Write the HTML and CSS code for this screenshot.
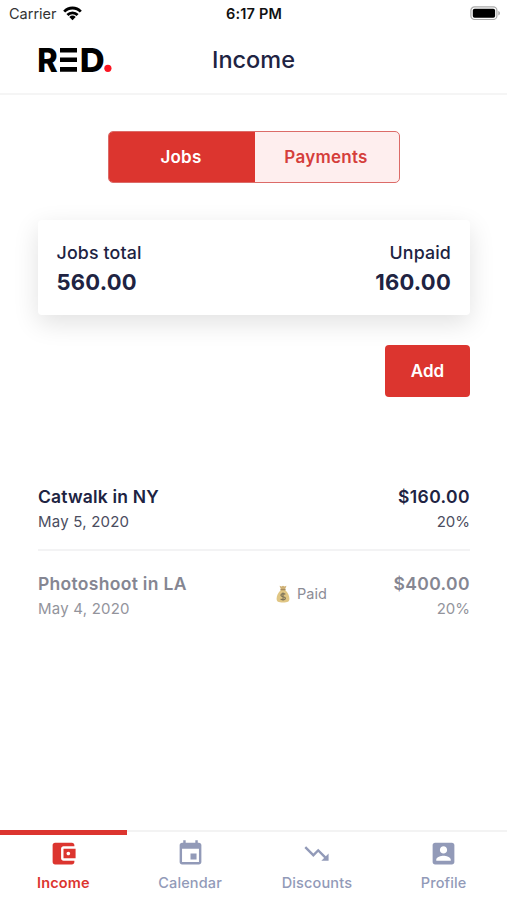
FILE: index.html
```html
<!DOCTYPE html>
<html lang="en">
<head>
<meta charset="utf-8">
<title>Income</title>
<link rel="stylesheet" href="styles.css">
</head>
<body>
<div class="app">
  <div class="status">
    <div class="carrier"><span>Carrier</span>
      <svg width="20" height="15" viewBox="0 0 20 15"><g fill="none" stroke="#000" stroke-width="2.8"><path d="M1.200 5.600C5.800.8 13.200.8 17.800 5.600"/><path d="M4.400 9C7.200 6.100 11.800 6.100 14.600 9"/></g><path d="M6.300 10.900c1.800-1.800 4.600-1.800 6.400 0L9.500 14.200z"/></svg>
    </div>
    <div class="time">6:17 PM</div>
    <svg class="battery" width="31" height="15" viewBox="0 0 31 15"><rect x=".9" y=".9" width="26" height="12.6" rx="3.6" fill="#fff" stroke="#aaa" stroke-width="1.2"/><rect x="2.8" y="2.7" width="22.3" height="9" rx="1.8"/><path d="M28.3 5c2.2.7 2.2 3.7 0 4.4z" fill="#aaa"/></svg>
  </div>
  <header class="header">
    <svg class="logo" width="80" height="44" viewBox="-3 -8 80 44"><text x="-.7" y="25.7" textLength="20.500" lengthAdjust="spacingAndGlyphs">R</text><path d="M22 2h17v4.600H22zM22 11.500h17v4.600H22zM22 21.100h17v4.600H22z"/><text x="41.700" y="25.7" textLength="25" lengthAdjust="spacingAndGlyphs">D</text><circle cx="69.9" cy="22.3" r="3.6" fill="#fa1522"/></svg>
    <h1>Income</h1>
  </header>
  <main>
    <div class="tabs"><div class="tab on">Jobs</div><div class="tab">Payments</div></div>
    <section class="card">
      <div><div class="label">Jobs total</div><div class="sum">560.00</div></div>
      <div class="right"><div class="label">Unpaid</div><div class="sum">160.00</div></div>
    </section>
    <button class="add">Add</button>
    <div class="list">
      <div class="row">
        <div class="what"><div class="name">Catwalk in NY</div><div class="sub">May 5, 2020</div></div>
        <div class="right"><div class="name amount">$160.00</div><div class="sub">20%</div></div>
      </div>
      <div class="row done">
        <div class="what"><div class="name">Photoshoot in LA</div><div class="sub">May 4, 2020</div></div>
        <div class="paid">
          <svg width="14" height="18" viewBox="0 0 14 18"><path d="M3.5.8l2 .6L7 .7l1.5.7 2-.6L9 4.4H5z" fill="#cfb074"/><path d="M5 5C2 7.600.6 10.500.6 13.800.6 16.600 2.300 17.500 7 17.500s6.400-.9 6.400-3.700C13.400 10.500 12 7.600 9 5z" fill="#e0c684"/><path d="M4.400 4.700h5.200" stroke="#a08455" stroke-width="1.200"/><path d="M9.300 9.400C8.400 8.300 4.900 8.300 4.900 10.200c0 2 4.500 1.100 4.500 3.100 0 1.900-3.800 1.900-4.800.6M7 7.600v8" fill="none" stroke="#7d7359" stroke-width="1.200"/></svg>
          <span>Paid</span>
        </div>
        <div class="right"><div class="name amount">$400.00</div><div class="sub">20%</div></div>
      </div>
    </div>
  </main>
  <nav class="nav">
    <div class="item on"><svg viewBox="0 0 24 24"><path d="M21 18v1c0 1.100-.9 2-2 2H5c-1.110 0-2-.9-2-2V5c0-1.100.89-2 2-2h14c1.100 0 2 .9 2 2v1h-9c-1.110 0-2 .9-2 2v8c0 1.100.89 2 2 2h9zm-9-2h10V8H12v8zm4-2.500c-.83 0-1.500-.67-1.500-1.500s.67-1.500 1.500-1.500 1.500.67 1.500 1.500-.67 1.500-1.500 1.500z"/></svg><span>Income</span></div>
    <div class="item"><svg viewBox="0 0 24 24"><path d="M17 12h-5v5h5v-5zM16 1v2H8V1H6v2H5c-1.110 0-1.990.9-1.990 2L3 19c0 1.100.89 2 2 2h14c1.100 0 2-.9 2-2V5c0-1.100-.9-2-2-2h-1V1h-2zm3 18H5V8h14v11z"/></svg><span>Calendar</span></div>
    <div class="item"><svg viewBox="0 0 24 24"><path d="M16 18l2.290-2.290-4.880-4.880-4 4L2 7.410 3.410 6l6 6 4-4 6.300 6.290L22 12v6z"/></svg><span>Discounts</span></div>
    <div class="item"><svg viewBox="0 0 24 24"><path d="M3 5v14c0 1.100.89 2 2 2h14c1.100 0 2-.9 2-2V5c0-1.100-.9-2-2-2H5c-1.110 0-2 .9-2 2zm12 4c0 1.660-1.340 3-3 3s-3-1.340-3-3 1.340-3 3-3 3 1.340 3 3zm-9 8c0-2 4-3.100 6-3.100s6 1.100 6 3.100v1H6v-1z"/></svg><span>Profile</span></div>
  </nav>
</div>
</body>
</html>
```
FILE: styles.css
```css
* { box-sizing: border-box; }
body { margin: 0; background: #fff; color: #202342; font-family: Inter, "Liberation Sans", sans-serif; }
svg { display: block; flex: none; }
.app { height: 900px; display: flex; flex-direction: column; overflow: hidden; }
.status { height: 28px; display: grid; grid-template-columns: 1fr auto 1fr; align-items: center; padding: 0 6px 0 9px; font-size: 14.5px; color: #111; }
.carrier { display: flex; align-items: center; gap: 6px; color: #333; margin-top: -1px; }
.carrier svg { margin-top: -1px; }
.time { font-weight: 600; padding-right: 2px; letter-spacing: .2px; margin-top: -1px; }
.battery { justify-self: end; margin-top: -1px; }
.header { height: 67px; border-bottom: 2px solid #f5f5f5; display: grid; grid-template-columns: 1fr auto 1fr; align-items: center; padding: 0 37.600px 0 34.600px; }
.logo { margin-top: -2px; overflow: visible; }
.logo text { font-size: 33px; font-weight: 800; }
.header h1 { margin: -1px 0 0; font-size: 23.500px; line-height: 30px; font-weight: 500; transform: translateX(1.500px); }
main { flex: 1; padding: 36px 37px 0 38px; display: flex; flex-direction: column; }
.tabs { width: 292px; height: 52px; margin-left: 70px; border: 1.500px solid #dc6b68; border-radius: 5px; background: #feeeee; display: flex; overflow: hidden; }
.tab { flex: 0 0 144px; display: grid; place-items: center; font-size: 17px; font-weight: 600; color: #d53e3b; letter-spacing: .26px; padding-right: 2px; }
.tab.on { flex: 0 0 146px; background: #dc352f; color: #fff; }
.card { height: 95px; margin-top: 37px; padding: 20px 19px; border-radius: 4px; box-shadow: 0 8px 26px rgba(0,0,0,.12); display: flex; justify-content: space-between; }
.right { text-align: right; }
.label { font-size: 17.800px; line-height: 26px; font-weight: 500; letter-spacing: .15px; }
.sum { font-size: 22px; line-height: 33px; font-weight: 700; letter-spacing: .25px; }
.card > div { margin-left: -.5px; }
.add { width: 85px; height: 52px; align-self: flex-end; margin-top: 30px; border: 0; border-radius: 4px; background: #dc352f; color: #fff; font: 600 17px Inter, sans-serif; }
.list { margin-top: 86px; }
.row { height: 68px; display: flex; justify-content: space-between; border-bottom: 2px solid #f3f3f4; }
.row.done { margin-top: 19px; border: 0; color: #858692; }
.name { font-size: 17.500px; line-height: 28px; font-weight: 600; letter-spacing: .18px; }
.done .name { letter-spacing: .3px; }
.amount, .done .amount { letter-spacing: .4px; }
.sub { font-size: 15px; line-height: 22px; color: #4b4d60; letter-spacing: .22px; }
.right .sub { letter-spacing: 0; }
.done .sub { color: #93949c; }
.what { width: 238px; }
.paid { flex: 1; display: flex; align-items: center; height: 47px; gap: 7px; font-size: 14.500px; color: #8b8c96; }
.nav { height: 70px; display: grid; grid-template-columns: repeat(4, 1fr); }
.item { border-top: 2px solid #f3f3f3; padding-top: 7px; display: flex; flex-direction: column; align-items: center; color: #929ab8; font-size: 14.500px; font-weight: 500; letter-spacing: .15px; }
.item.on { border-top: 5px solid #dc352f; padding-top: 4px; color: #dc352f; font-weight: 600; }
.item svg { width: 29px; height: 29px; fill: currentColor; }
.item span { line-height: 20px; margin-top: 5px; }
```
